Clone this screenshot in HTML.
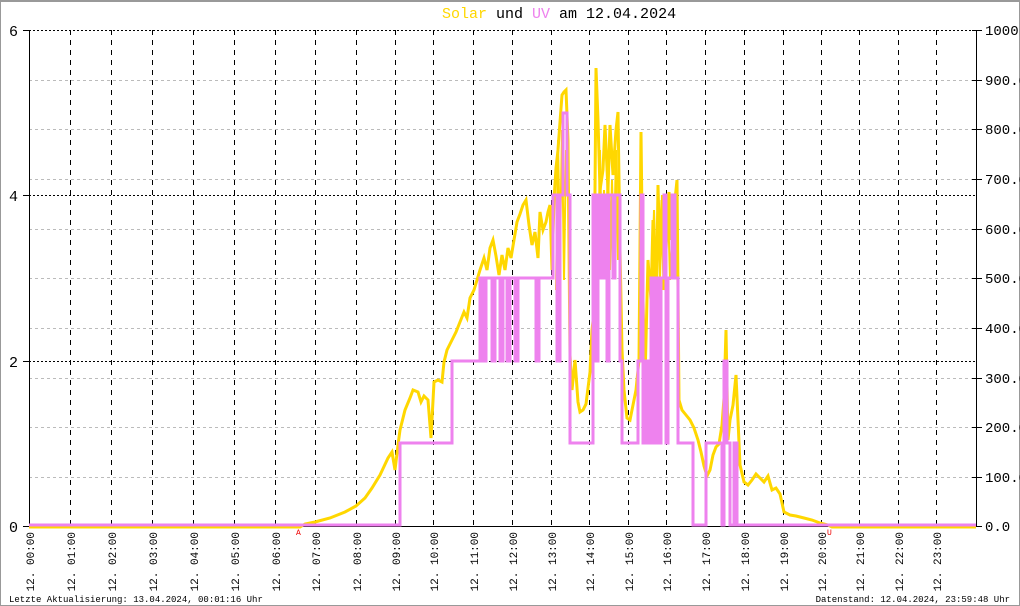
<!DOCTYPE html>
<html><head><meta charset="utf-8"><style>
html,body{margin:0;padding:0;background:#fff}
svg{display:block}
text{font-family:"Liberation Mono","DejaVu Sans Mono",monospace}
</style></head><body>
<svg width="1020" height="606" viewBox="0 0 1020 606" xmlns="http://www.w3.org/2000/svg">
<rect x="0.5" y="0.5" width="1019" height="605" fill="#fff" stroke="#999"/>
<line x1="0" y1="1" x2="1020" y2="1" stroke="#999" stroke-width="2"/>
<g stroke="#bbb" stroke-width="1" stroke-dasharray="3,3">
<line x1="29" y1="80.5" x2="976" y2="80.5"/>
<line x1="29" y1="129.5" x2="976" y2="129.5"/>
<line x1="29" y1="179.5" x2="976" y2="179.5"/>
<line x1="29" y1="229.5" x2="976" y2="229.5"/>
<line x1="29" y1="278.5" x2="976" y2="278.5"/>
<line x1="29" y1="328.5" x2="976" y2="328.5"/>
<line x1="29" y1="378.5" x2="976" y2="378.5"/>
<line x1="29" y1="427.5" x2="976" y2="427.5"/>
<line x1="29" y1="477.5" x2="976" y2="477.5"/>
</g>
<g stroke="#000" stroke-width="1" stroke-dasharray="2,2">
<line x1="29" y1="30.5" x2="976" y2="30.5"/>
<line x1="29" y1="195.5" x2="976" y2="195.5"/>
<line x1="29" y1="361.5" x2="976" y2="361.5"/>
</g>
<g stroke="#000" stroke-width="1" stroke-dasharray="5,5">
<line x1="70.5" y1="30" x2="70.5" y2="526"/><line x1="111.5" y1="30" x2="111.5" y2="526"/>
<line x1="152.5" y1="30" x2="152.5" y2="526"/><line x1="193.5" y1="30" x2="193.5" y2="526"/>
<line x1="234.5" y1="30" x2="234.5" y2="526"/><line x1="275.5" y1="30" x2="275.5" y2="526"/>
<line x1="315.5" y1="30" x2="315.5" y2="526"/><line x1="356.5" y1="30" x2="356.5" y2="526"/>
<line x1="395.5" y1="30" x2="395.5" y2="526"/><line x1="433.5" y1="30" x2="433.5" y2="526"/>
<line x1="473.5" y1="30" x2="473.5" y2="526"/><line x1="512.5" y1="30" x2="512.5" y2="526"/>
<line x1="551.5" y1="30" x2="551.5" y2="526"/><line x1="589.5" y1="30" x2="589.5" y2="526"/>
<line x1="628.5" y1="30" x2="628.5" y2="526"/><line x1="666.5" y1="30" x2="666.5" y2="526"/>
<line x1="705.5" y1="30" x2="705.5" y2="526"/><line x1="744.5" y1="30" x2="744.5" y2="526"/>
<line x1="783.5" y1="30" x2="783.5" y2="526"/><line x1="821.5" y1="30" x2="821.5" y2="526"/>
<line x1="859.5" y1="30" x2="859.5" y2="526"/><line x1="898.5" y1="30" x2="898.5" y2="526"/>
<line x1="936.5" y1="30" x2="936.5" y2="526"/>
</g>
<g stroke="#000" stroke-width="1">
<line x1="29.5" y1="30" x2="29.5" y2="526"/>
<line x1="976.5" y1="30" x2="976.5" y2="526"/>
<line x1="29" y1="526.5" x2="976" y2="526.5"/>
<line x1="23" y1="30.5" x2="29" y2="30.5"/><line x1="23" y1="195.5" x2="29" y2="195.5"/>
<line x1="23" y1="361.5" x2="29" y2="361.5"/><line x1="23" y1="526.5" x2="29" y2="526.5"/>
<line x1="972" y1="30.5" x2="982" y2="30.5"/><line x1="972" y1="80.5" x2="982" y2="80.5"/>
<line x1="972" y1="129.5" x2="982" y2="129.5"/><line x1="972" y1="179.5" x2="982" y2="179.5"/>
<line x1="972" y1="229.5" x2="982" y2="229.5"/><line x1="972" y1="278.5" x2="982" y2="278.5"/>
<line x1="972" y1="328.5" x2="982" y2="328.5"/><line x1="972" y1="378.5" x2="982" y2="378.5"/>
<line x1="972" y1="427.5" x2="982" y2="427.5"/><line x1="972" y1="477.5" x2="982" y2="477.5"/>
<line x1="972" y1="526.5" x2="982" y2="526.5"/>
</g>
<polyline fill="none" stroke="#ffd700" stroke-width="3" stroke-linejoin="miter" points="29,527 300,527 305,524 315,522 330,518 345,512 356,506 365,498 372,488 380,475 388,458 392,452 395,470 398,445 400,430 405,410 410,398 413,390 418,392 421,402 424,396 428,400 431,438 434,382 438,380 442,382 444,362 447,350 452,340 456,332 460,322 464,312 467,318 470,298 474,290 477,280 480,270 484,258 487,270 490,248 493,240 496,256 499,275 502,255 505,270 508,248 511,258 514,240 517,222 520,214 523,205 526,200 529,225 532,245 535,232 538,258 540,212 543,230 546,222 548,212 550,205 552,270 554,200 556,168 558,150 560,122 562,95 564,92 566,90 568,140 570,355 572,390 575,360 578,402 580,412 583,410 586,404 590,372 592,330 594,312 596,68 598,120 600,190 603,170 605,125 608,190 610,125 613,175 616,130 618,112 620,250 622,350 624,390 627,418 630,420 633,405 636,390 639,360 641,132 643,300 645,380 648,260 651,300 653,220 656,330 658,185 660,260 662,200 664,290 666,250 669,192 671,240 673,210 675,200 677,180 679,400 682,410 686,415 690,420 694,428 698,440 701,452 704,466 707,476 710,470 713,455 716,447 719,444 722,425 724,398 726,330 728,440 730,420 733,405 736,375 738,420 740,465 744,482 748,485 752,480 756,474 760,478 764,482 768,476 772,490 776,488 780,494 784,512 790,515 796,516 804,518 812,520 820,523 828,525 832,527 976,527"/>
<g fill="none" stroke="#ffd700" stroke-width="2">
<polyline points="556,290 558,140 560,250 562,130 564,280 566,150"/>
<polyline points="598,270 600,150 602,260 604,190 606,240 608,160 610,270 612,180 614,250 616,150 618,260 620,200"/>
<polyline points="652,280 654,210 656,270 658,200 660,280 662,195 664,270 668,205 670,280 674,200 676,270"/>
</g>
<polyline fill="none" stroke="#ee82ee" stroke-width="3" stroke-linejoin="miter" points="29,525 400,525 400,443 452,443 452,361 480,361 480,278 483,278 483,361 486,361 486,278 492,278 492,361 495,361 495,278 500,278 500,361 503,361 503,278 507,278 507,361 510,361 510,278 515,278 515,361 518,361 518,278 536,278 536,361 539,361 539,278 553,278 553,195 557,195 557,361 560,361 560,195 563,195 563,113 567,113 567,195 570,195 570,443 593,443 593,195 596,195 596,361 598,361 598,195 601,195 601,278 604,278 604,195 607,195 607,361 609,361 609,195 613,195 613,278 615,278 615,195 620,195 620,361 622,361 622,443 638,443 638,361 641,361 641,195 643,195 643,443 645,443 645,361 648,361 648,443 651,443 651,278 654,278 654,443 656,443 656,278 659,278 659,443 661,443 661,278 664,278 664,195 666,195 666,443 668,443 668,278 672,278 672,195 675,195 675,278 678,278 678,443 693,443 693,525 706,525 706,443 722,443 722,525 724,525 724,361 727,361 727,443 730,443 730,525 734,525 734,443 737,443 737,525 976,525"/>
<text x="296" y="535" font-size="8" fill="#e00">A</text>
<text x="827" y="535" font-size="8" fill="#e00">U</text>
<text x="442" y="18" font-size="15"><tspan fill="#ffd700">Solar</tspan><tspan fill="#000"> und </tspan><tspan fill="#ee82ee">UV</tspan><tspan fill="#000"> am 12.04.2024</tspan></text>
<g font-size="15" fill="#000">
<text x="9" y="36">6</text><text x="9" y="201">4</text><text x="9" y="367">2</text><text x="9" y="532">0</text>
</g>
<g font-size="14" fill="#000">
<text x="985" y="35">1000</text><text x="985" y="85">900.0</text><text x="985" y="134">800.0</text>
<text x="985" y="184">700.0</text><text x="985" y="234">600.0</text><text x="985" y="283">500.0</text>
<text x="985" y="333">400.0</text><text x="985" y="383">300.0</text><text x="985" y="432">200.0</text>
<text x="985" y="482">100.0</text><text x="985" y="531">0.0</text>
</g>
<g font-size="11" fill="#000" text-anchor="end">
<text transform="translate(34,532) rotate(-90)">12. 00:00</text>
<text transform="translate(75,532) rotate(-90)">12. 01:00</text>
<text transform="translate(116,532) rotate(-90)">12. 02:00</text>
<text transform="translate(157,532) rotate(-90)">12. 03:00</text>
<text transform="translate(198,532) rotate(-90)">12. 04:00</text>
<text transform="translate(239,532) rotate(-90)">12. 05:00</text>
<text transform="translate(280,532) rotate(-90)">12. 06:00</text>
<text transform="translate(320,532) rotate(-90)">12. 07:00</text>
<text transform="translate(361,532) rotate(-90)">12. 08:00</text>
<text transform="translate(400,532) rotate(-90)">12. 09:00</text>
<text transform="translate(438,532) rotate(-90)">12. 10:00</text>
<text transform="translate(478,532) rotate(-90)">12. 11:00</text>
<text transform="translate(517,532) rotate(-90)">12. 12:00</text>
<text transform="translate(556,532) rotate(-90)">12. 13:00</text>
<text transform="translate(594,532) rotate(-90)">12. 14:00</text>
<text transform="translate(633,532) rotate(-90)">12. 15:00</text>
<text transform="translate(671,532) rotate(-90)">12. 16:00</text>
<text transform="translate(710,532) rotate(-90)">12. 17:00</text>
<text transform="translate(749,532) rotate(-90)">12. 18:00</text>
<text transform="translate(788,532) rotate(-90)">12. 19:00</text>
<text transform="translate(826,532) rotate(-90)">12. 20:00</text>
<text transform="translate(864,532) rotate(-90)">12. 21:00</text>
<text transform="translate(903,532) rotate(-90)">12. 22:00</text>
<text transform="translate(941,532) rotate(-90)">12. 23:00</text>
</g>
<text x="9" y="602" font-size="9" fill="#000">Letzte Aktualisierung: 13.04.2024, 00:01:16 Uhr</text>
<text x="1010" y="602" font-size="9" fill="#000" text-anchor="end">Datenstand: 12.04.2024, 23:59:48 Uhr</text>
</svg>
</body></html>
